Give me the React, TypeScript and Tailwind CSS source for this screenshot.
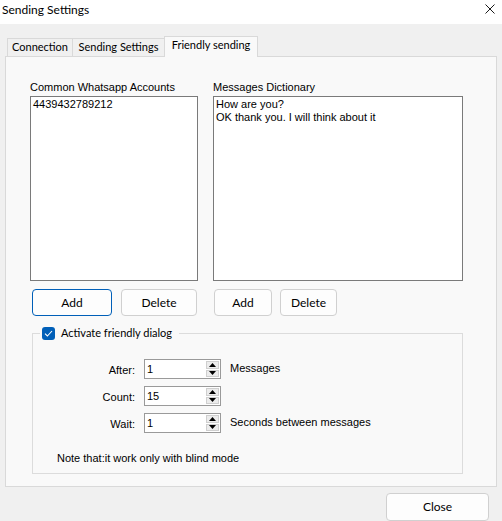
import React from "react";

const ui = "font-['Lato','Noto_Sans',sans-serif]";
const ms = "font-['Liberation_Sans',Arial,sans-serif]";

function Button({ label, w, focused = false, h = "h-[27px]" }: { label: string; w: string; focused?: boolean; h?: string }) {
  return (
    <button
      className={`${w} ${h} ${ui} text-[12px] text-black bg-[#fdfdfd] rounded-[4px] border ${
        focused ? "border-[#005fb8]" : "border-[#d0d0d0]"
      } flex items-center justify-center`}
    >
      {label}
    </button>
  );
}

function Spin({ value }: { value: string }) {
  return (
    <div className="w-[77px] h-[20px] border border-[#9a9a9a] bg-white flex items-stretch">
      <div className={`flex-1 pl-[2px] ${ms} text-[11px] leading-[18px] text-black`}>{value}</div>
      <div className="w-[13px] my-[1px] mr-[1px] flex flex-col gap-px">
        <div className="flex-1 bg-[#ececec] border border-[#cfcfcf] flex items-center justify-center">
          <svg width="7" height="4" viewBox="0 0 7 4">
            <path d="M0 4 L3.5 0 L7 4 Z" fill="#000" />
          </svg>
        </div>
        <div className="flex-1 bg-[#ececec] border border-[#cfcfcf] flex items-center justify-center">
          <svg width="7" height="4" viewBox="0 0 7 4">
            <path d="M0 0 L3.5 4 L7 0 Z" fill="#000" />
          </svg>
        </div>
      </div>
    </div>
  );
}

function SpinRow({ label, value, unit }: { label: string; value: string; unit?: string }) {
  return (
    <div className="flex items-center h-[20px]">
      <div className={`w-[102px] text-right ${ms} text-[11px] text-black pt-[3px]`}>{label}</div>
      <div className="ml-[9px]">
        <Spin value={value} />
      </div>
      {unit && <div className={`ml-[9px] ${ms} text-[11px] text-black -mt-[2px]`}>{unit}</div>}
    </div>
  );
}

export default function App() {
  return (
    <div className="w-[502px] h-[521px] bg-[#f0f0f0] overflow-hidden flex flex-col">
      {/* title bar */}
      <div className="h-[24px] bg-white flex items-center justify-between pl-[2px] pr-[7px]">
        <span className={`${ui} text-[12px] text-black -mt-[4px]`}>Sending Settings</span>
        <svg width="10" height="10" viewBox="0 0 10 10" className="-mt-[6px]">
          <path d="M0.5 0.5 L9.5 9.5 M9.5 0.5 L0.5 9.5" stroke="#1a1a1a" strokeWidth="1" />
        </svg>
      </div>

      {/* tabs */}
      <div className="px-[5px] pt-[12px]">
        <div className="flex items-end h-[20px] pl-[2px] relative z-10">
          <div className={`w-[66px] h-[18px] border border-b-0 border-[#d9d9d9] bg-[#f0f0f0] ${ui} text-[11px] text-black flex items-center justify-center`}>
            Connection
          </div>
          <div className={`w-[93px] h-[18px] -ml-px border border-b-0 border-[#d9d9d9] bg-[#f0f0f0] ${ui} text-[11px] text-black flex items-center justify-center`}>
            Sending Settings
          </div>
          <div className={`w-[94px] h-[21px] -ml-px -mb-px border border-b-0 border-[#d9d9d9] bg-[#f9f9f9] ${ui} text-[11px] text-black flex items-center justify-center pb-[3px]`}>
            Friendly sending
          </div>
        </div>

        {/* tab page */}
        <div className="h-[431px] border border-[#d9d9d9] bg-[#f9f9f9] pl-[24px] pt-[24px]">
          <div className="flex gap-[15px]">
            <div className="w-[168px] flex flex-col">
              <div className={`${ms} text-[11px] text-black h-[13px] leading-[13px] mb-[2px]`}>Common Whatsapp Accounts</div>
              <div className={`h-[185px] border border-[#7a7a7a] bg-white px-[2px] ${ms} text-[11px] leading-[13px] text-black pt-[1px]`}>
                4439432789212
              </div>
              <div className="flex gap-[9px] mt-[8px] pl-[2px]">
                <Button label="Add" w="w-[80px]" focused />
                <Button label="Delete" w="w-[76px]" />
              </div>
            </div>
            <div className="w-[250px] flex flex-col">
              <div className={`${ms} text-[11px] text-black h-[13px] leading-[13px] mb-[2px]`}>Messages Dictionary</div>
              <div className={`h-[185px] border border-[#7a7a7a] bg-white px-[2px] ${ms} text-[11px] leading-[13px] text-black pt-[1px]`}>
                <div>How are you?</div>
                <div>OK thank you. I will think about it</div>
              </div>
              <div className="flex gap-[8px] mt-[8px] pl-[1px]">
                <Button label="Add" w="w-[58px]" />
                <Button label="Delete" w="w-[57px]" />
              </div>
            </div>
          </div>

          {/* group box */}
          <fieldset className="w-[431px] ml-[2px] mt-[11px] border border-[#dcdcdc] pb-[8px]">
            <legend className="ml-[7px] pl-[2px] pr-[7px]">
              <div className="flex items-center h-[13px]">
                <div className="w-[13px] h-[13px] rounded-[3px] bg-[#005fb8] flex items-center justify-center">
                  <svg width="9" height="7" viewBox="0 0 9 7">
                    <path d="M1 3.6 L3.4 6 L8 1" stroke="#fff" strokeWidth="1.1" fill="none" />
                  </svg>
                </div>
                <span className={`ml-[6px] ${ui} text-[11px] text-black`}>Activate friendly dialog</span>
              </div>
            </legend>
            <div className="flex flex-col gap-[7px] mt-[19px]">
              <SpinRow label="After:" value="1" unit="Messages" />
              <SpinRow label="Count:" value="15" />
              <SpinRow label="Wait:" value="1" unit="Seconds between messages" />
            </div>
            <div className={`mt-[19px] pl-[24px] ${ms} text-[11px] leading-[13px] text-black`}>
              Note that:it work only with blind mode
            </div>
          </fieldset>
        </div>
      </div>

      {/* footer */}
      <div className="flex justify-end pr-[13px] pt-[6px]">
        <Button label="Close" w="w-[103px]" h="h-[28px]" />
      </div>
    </div>
  );
}
